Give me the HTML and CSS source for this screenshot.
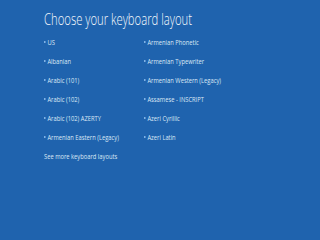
FILE: index.html
```html
<!DOCTYPE html>
<html>
<head>
<meta charset="utf-8">
<link rel="stylesheet" href="styles.css">
</head>
<body>
<div class="page">
  <h1 class="title">Choose your keyboard layout</h1>
  <ul class="layouts">
    <li class="item">US</li>
    <li class="item">Armenian Phonetic</li>
    <li class="item">Albanian</li>
    <li class="item">Armenian Typewriter</li>
    <li class="item">Arabic (101)</li>
    <li class="item">Armenian Western (Legacy)</li>
    <li class="item">Arabic (102)</li>
    <li class="item">Assamese - INSCRIPT</li>
    <li class="item">Arabic (102) AZERTY</li>
    <li class="item">Azeri Cyrillic</li>
    <li class="item">Armenian Eastern (Legacy)</li>
    <li class="item">Azeri Latin</li>
  </ul>
  <a class="more">See more keyboard layouts</a>
</div>
</body>
</html>
```
FILE: styles.css
```css
html, body {
  margin: 0;
  padding: 0;
  background: #1f63ae;
  width: 320px;
  height: 240px;
  overflow: hidden;
}
.page {
  padding: 9px 0 0 44px;
  font-family: "Open Sans", "Noto Sans", sans-serif;
  color: #fff;
}
.title {
  margin: 0;
  font-weight: 300;
  font-size: 16px;
  line-height: 20px;
  white-space: nowrap;
  transform: scaleX(0.705);
  transform-origin: left center;
  color: #f4f8fc;
}
.layouts {
  list-style: none;
  margin: 8px 0 0 0;
  padding: 0;
  display: grid;
  grid-template-columns: 100px 1fr;
  grid-auto-rows: 19px;
}
.item {
  display: flex;
  align-items: center;
  gap: 2.5px;
  font-size: 7.5px;
  color: #dce8f5;
  height: 10px;
  white-space: nowrap;
  transform: scaleX(0.77);
  transform-origin: left center;
}
.item::before {
  content: "";
  width: 2px;
  height: 2px;
  background: #7fb2e6;
}
.more {
  display: block;
  margin-top: 0;
  font-size: 7.5px;
  line-height: 10px;
  color: #dce8f5;
  white-space: nowrap;
  transform: scaleX(0.77);
  transform-origin: left center;
}
```
